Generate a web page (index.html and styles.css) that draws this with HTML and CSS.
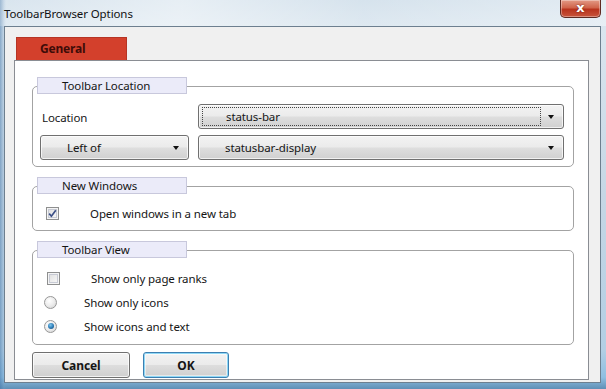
FILE: index.html
```html
<!DOCTYPE html>
<html>
<head>
<meta charset="utf-8">
<link rel="stylesheet" href="styles.css">
</head>
<body>
<div class="window">
  <div class="titlebar">
    <span class="title">ToolbarBrowser Options</span>
    <div class="close">x</div>
  </div>
  <div class="client">
    <div class="tabs"><div class="tab">General</div></div>
    <div class="panel">
      <div class="group">
        <div class="legend">Toolbar Location</div>
        <div class="box box-location">
          <div class="loc-grid">
            <div class="label">Location</div>
            <div class="select focused"><span class="focus-rect">status-bar</span><i class="arrow"></i></div>
            <div class="select"><span class="val">Left of</span><i class="arrow"></i></div>
            <div class="select"><span class="val">statusbar-display</span><i class="arrow"></i></div>
          </div>
        </div>
      </div>
      <div class="group">
        <div class="legend">New Windows</div>
        <div class="box box-windows">
          <div class="row row-check">
            <span class="check">
              <svg width="9" height="9" viewBox="0 0 9 9"><path d="M1.2 4.6 L3.4 7.2 L7.8 1.2" fill="none" stroke="#3b4f86" stroke-width="1.7"/></svg>
            </span>
            <span class="text">Open windows in a new tab</span>
          </div>
        </div>
      </div>
      <div class="group">
        <div class="legend">Toolbar View</div>
        <div class="box box-view">
          <div class="row row-check alt"><span class="check empty"></span><span class="text">Show only page ranks</span></div>
          <div class="row row-radio"><span class="radio"></span><span class="text">Show only icons</span></div>
          <div class="row row-radio"><span class="radio on"></span><span class="text">Show icons and text</span></div>
        </div>
      </div>
      <div class="buttons">
        <div class="btn btn-cancel">Cancel</div>
        <div class="btn btn-ok">OK</div>
      </div>
    </div>
  </div>
</div>
</body>
</html>
```
FILE: styles.css
```css
* { box-sizing: border-box; }
html, body { margin: 0; padding: 0; }
body {
  font-family: "Noto Sans", "Open Sans", sans-serif;
  font-size: 11.5px;
  letter-spacing: -0.1px;
  color: #151515;
}
.window {
  width: 606px;
  height: 389px;
  display: flex;
  flex-direction: column;
  background:
    linear-gradient(90deg, rgba(70,120,170,0.55) 0, rgba(120,160,200,0.2) 4px, rgba(255,255,255,0) 6px),
    linear-gradient(180deg, #cfdeea 0%, #dae6ef 8%, #c6d7e5 50%, #b3cfe4 90%, #8ebfe2 97%, #5f8fb5 100%);
  overflow: hidden;
}
.titlebar {
  height: 26px;
  display: flex;
  align-items: flex-start;
  padding-left: 4px;
  background: linear-gradient(90deg, rgba(255,255,255,0.2) 0, rgba(255,255,255,0.5) 30%, rgba(255,255,255,0.15) 60%, rgba(255,255,255,0.4) 100%);
}
.title {
  padding-top: 6px;
  line-height: 16px;
  color: #111;
}
.close {
  margin-left: auto;
  margin-right: 5px;
  width: 41px;
  height: 18px;
  border: 1px solid #5e2a22;
  border-top: none;
  border-radius: 0 0 5px 5px;
  background: linear-gradient(180deg, #e39a86 0%, #d0644b 45%, #b8331d 55%, #c8553c 100%);
  box-shadow: inset 0 0 0 1px rgba(255,255,255,0.35);
  color: #fff;
  font-family: "DejaVu Sans", sans-serif;
  font-weight: bold;
  font-size: 13px;
  letter-spacing: 0;
  line-height: 15px;
  text-align: center;
  text-shadow: 0 0 2px #6b1a10;
}
.client {
  margin: 0 5px 0 4px;
  height: 357px;
  border: 1px solid #6d7f8f;
  background: #f0f0f0;
  padding-top: 10px;
}
.tabs {
  display: flex;
  padding-left: 11px;
}
.tab {
  width: 111px;
  height: 23px;
  background: #d3402c;
  border: 1px solid #b63424;
  border-bottom: none;
  color: #3f0c08;
  font-weight: bold;
  font-size: 12px;
  line-height: 21px;
  padding-left: 23px;
  letter-spacing: -0.2px;
}
.panel {
  margin-left: 9px;
  width: 575px;
  height: 320px;
  border: 1px solid #8a8d93;
  background: #fff;
  padding: 16px 14px 0 17px;
}
.group { display: flex; flex-direction: column; margin-bottom: 10px; }
.legend {
  position: relative;
  z-index: 1;
  width: 150px;
  height: 17px;
  margin-left: 5px;
  background: #ebebf9;
  border: 1px solid #c8c8dc;
  padding-left: 24px;
  line-height: 15px;
}
.box {
  margin-top: -8px;
  border: 1px solid #a3a3a3;
  border-radius: 5px;
}
.box-location { height: 81px; padding: 17px 9px 0 7px; }
.box-windows { height: 45px; padding: 17px 0 0 13px; }
.box-view { height: 95px; padding: 15px 0 0 0; }
.loc-grid {
  display: grid;
  grid-template-columns: 149px 1fr;
  grid-template-rows: 25px 25px;
  column-gap: 9px;
  row-gap: 6px;
}
.label { display: flex; align-items: center; padding-left: 2px; padding-top: 1px; }
.select {
  display: flex;
  align-items: center;
  border: 1px solid #707070;
  border-radius: 3px;
  background: linear-gradient(180deg, #f3f3f3 0%, #ebebeb 48%, #dedede 52%, #d0d0d0 100%);
  box-shadow: inset 0 0 0 1px rgba(255,255,255,0.7);
  padding: 0 8px 0 26px;
}
.select .val { padding-bottom: 1px; }
.select.focused { padding-left: 3px; }
.focus-rect {
  flex: 1;
  height: 19px;
  border: 1px dotted #444;
  padding-left: 23px;
  line-height: 17px;
  margin-right: 7px;
}
.arrow {
  margin-left: auto;
  width: 0;
  height: 0;
  border-left: 3.5px solid transparent;
  border-right: 3.5px solid transparent;
  border-top: 4px solid #111;
  margin-right: 1px;
}
.row { display: flex; align-items: center; }
.box-windows .row { height: 18px; }
.box-view .row { height: 24px; }
.check {
  width: 13px;
  height: 13px;
  border: 1px solid #8e8f8f;
  background: linear-gradient(135deg, #dcdcdc, #fbfbfb);
  box-shadow: inset 0 0 0 1px #f4f4f4, inset 0 0 0 2px #c7cad4;
  display: flex;
  align-items: center;
  justify-content: center;
}
.check svg { display: block; }
.row-check .text { margin-left: 31px; }
.row-check.alt { padding-left: 14px; }
.row-radio { padding-left: 11px; }
.radio {
  width: 13px;
  height: 13px;
  border-radius: 50%;
  border: 1px solid #979797;
  background: radial-gradient(circle at 40% 35%, #ffffff 0%, #ececec 50%, #cfcfcf 100%);
  display: flex;
  align-items: center;
  justify-content: center;
}
.radio.on::after {
  content: "";
  width: 6px;
  height: 6px;
  border-radius: 50%;
  background: radial-gradient(circle at 40% 35%, #7fc6ee 0%, #2a7ab5 55%, #123f66 100%);
}
.row-radio .text { margin-left: 27px; }
.buttons {
  display: flex;
  gap: 13px;
  margin-top: -3px;
}
.btn {
  height: 26px;
  border: 1px solid #707070;
  border-radius: 3px;
  background: linear-gradient(180deg, #f3f3f3 0%, #ebebeb 48%, #dddddd 52%, #cfcfcf 100%);
  box-shadow: inset 0 0 0 1px rgba(255,255,255,0.75);
  font-weight: bold;
  font-size: 12px;
  display: flex;
  align-items: center;
  justify-content: center;
}
.btn-cancel { width: 98px; }
.btn-ok {
  width: 86px;
  border-color: #3c7fb1;
  box-shadow: inset 0 0 0 1px #8fd8f6, inset 0 0 0 2px rgba(255,255,255,0.5);
}
```
